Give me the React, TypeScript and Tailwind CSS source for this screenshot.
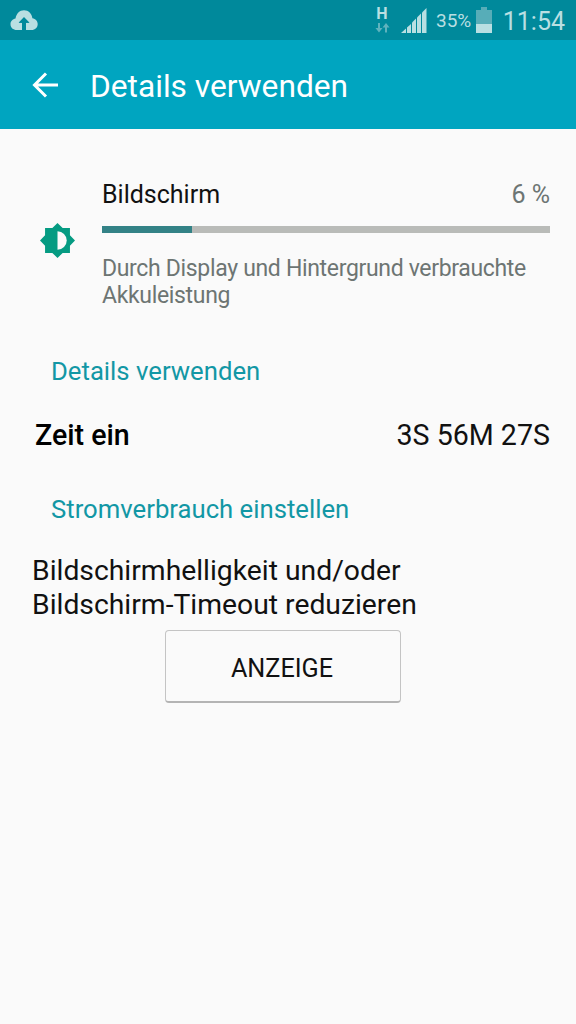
import React from 'react';

type SectionTitleProps = {
  children: React.ReactNode;
};

const CloudUploadIcon = () => (
  <svg width="28" height="20" viewBox="0 0 28 20" fill="none">
    <path
      d="M7 20C3 20 .5 17.500 .5 14.200C.5 11.200 2.700 9 5.500 8.500C6.300 3.800 9.500 .3 14 .3C18.600 .3 21.800 3.600 22.400 8.200C25.500 8.600 27.700 11 27.700 14C27.700 17.500 25.200 20 21.500 20H16V12.800H19.400L14 7.300L8.700 12.800H12V20Z"
      fill="#b9dfe2"
    />
    <path d="M14 7.300L19.400 12.800H16V20H12V12.800H8.700Z" fill="#00899b" />
  </svg>
);

const NetworkIcon = () => (
  <div className="flex w-4 flex-col items-center">
    <span className="h-[15px] text-[16px] leading-[15px] font-bold">H</span>
    <svg className="mt-[2px]" width="15" height="10" viewBox="0 0 15 10" fill="#5fb2bd">
      <path d="M3 0H5V5H7.500L4 9.500L.5 5H3Z" />
      <path d="M10 9.500H12V4.500H14.500L11 0L7.500 4.500H10Z" />
    </svg>
  </div>
);

const SignalIcon = () => (
  <svg width="26" height="25" viewBox="0 0 26 25" fill="#b9dfe2">
    <path d="M0 25L5 20.500V25Z" />
    <path d="M6 19.500L10 16V25H6Z" />
    <path d="M11 14.500L15 10.500V25H11Z" />
    <path d="M16 9.500L20 5.500V25H16Z" />
    <path d="M21 4.500L25.500 0V25H21Z" />
  </svg>
);

const BatteryIcon = () => (
  <svg width="16" height="26" viewBox="0 0 16 26">
    <path d="M5 0H11V3H16V17H0V3H5Z" fill="#57adb8" />
    <path d="M0 17H16V26H0Z" fill="#b9dfe2" />
  </svg>
);

const BackIcon = () => (
  <svg width="28" height="26" viewBox="0 0 28 26" fill="none" stroke="#fff" strokeWidth="3">
    <path d="M14 1.500L2.500 13L14 24.500M3 13H26" />
  </svg>
);

const BrightnessIcon = () => (
  <svg width="35" height="35" viewBox="0 0 36 36">
    <path
      d="M18 0L23.300 5.200H30.800V12.700L36 18L30.800 23.300V30.800H23.300L18 36L12.700 30.800H5.200V23.300L0 18L5.200 12.700V5.200H12.700Z"
      fill="#059b82"
    />
    <path d="M18 8.500A9.500 9.500 0 0 1 18 27.500Z" fill="#fafafa" />
  </svg>
);

const StatusBar = () => (
  <div className="flex h-10 justify-between bg-[#00899b] text-[#b9dfe2]">
    <div className="pt-[10px] pl-[10px]">
      <CloudUploadIcon />
    </div>
    <div className="flex pr-[11px]">
      <div className="pt-[6px]">
        <NetworkIcon />
      </div>
      <div className="pt-2 pl-[11px]">
        <SignalIcon />
      </div>
      <span className="w-[49px] pt-[9px] pl-[9px] text-[19px] leading-[24px] whitespace-nowrap">35%</span>
      <div className="pt-[7px]">
        <BatteryIcon />
      </div>
      <span className="w-[73px] pt-[7px] text-right text-[25px] leading-[30px]">11:54</span>
    </div>
  </div>
);

const SectionTitle = ({ children }: SectionTitleProps) => (
  <h2 className="pl-[51px] text-[25.700px] leading-[30px] text-[#1297a5]">{children}</h2>
);

export default function App() {
  return (
    <div className="h-[1024px] w-[576px] overflow-hidden bg-[#fafafa] font-['Roboto',sans-serif] text-[#111111]">
      <StatusBar />
      <header className="flex h-[89px] items-center bg-[#00a5c0] pl-[32px] text-white">
        <BackIcon />
        <h1 className="pt-[5px] pl-[30px] text-[31.700px] leading-[34px]">Details verwenden</h1>
      </header>

      <main>
        <div className="flex pt-[51px] pr-[26px] pl-[40px]">
          <div className="w-[62px] shrink-0 pt-[43px]">
            <BrightnessIcon />
          </div>
          <div className="flex-1">
            <div className="flex justify-between text-[25px] leading-[30px]">
              <span>Bildschirm</span>
              <span className="text-[#6d7573]">6 %</span>
            </div>
            <div className="mt-[16px] h-[7px] bg-[#b9bbb8]">
              <div className="h-full w-[90px] bg-[#338286]" />
            </div>
            <p className="mt-[23px] text-[23px] leading-[26.500px] tracking-[-0.330px] text-[#6d7573]">
              Durch Display und Hintergrund verbrauchte
              <br />
              Akkuleistung
            </p>
          </div>
        </div>

        <div className="pt-[47px]">
          <SectionTitle>Details verwenden</SectionTitle>
        </div>
        <div className="flex justify-between pt-[33px] pr-[26px] pb-px pl-[35px] text-[28.600px] leading-[32px]">
          <span className="font-medium text-black">Zeit ein</span>
          <span>3S 56M 27S</span>
        </div>
        <div className="pt-[42px]">
          <SectionTitle>Stromverbrauch einstellen</SectionTitle>
        </div>
        <p className="pt-[30px] pl-[32px] text-[28.300px] leading-[34px]">
          Bildschirmhelligkeit und/oder
          <br />
          Bildschirm-Timeout reduzieren
        </p>
        <button className="mt-[8px] ml-[165px] block h-[73px] w-[236px] rounded-[4px] border border-b-2 border-[#c4c4c4] border-b-[#b4b4b4] pt-[5px] pr-[2px] text-[25.200px] leading-[30px]">
          ANZEIGE
        </button>
      </main>
    </div>
  );
}
